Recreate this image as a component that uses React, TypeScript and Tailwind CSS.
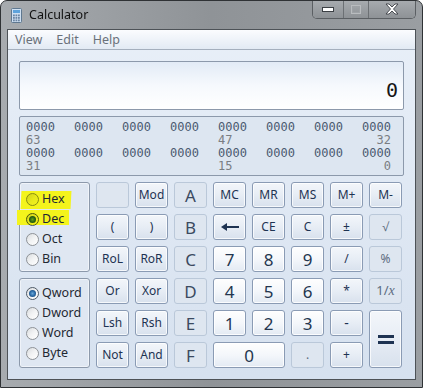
import React from "react";

const UI = "font-['Noto_Sans','Open_Sans',sans-serif]";
const MONO = "font-['DejaVu_Sans_Mono','Liberation_Mono',monospace]";

type Kind = "op" | "digit" | "dis" | "hex";

const kindClass: Record<Kind, string> = {
  op: "border-[#8a9bb4] bg-linear-to-b from-[#f3f6fa] via-[#e7edf5] to-[#d8e1ed] text-[#1e3352] text-[12px] shadow-[inset_0_0_0_1px_rgba(255,255,255,0.75)]",
  digit:
    "border-[#8a9bb4] bg-linear-to-b from-[#fefefe] via-[#f4f7fb] to-[#e3eaf3] text-[#24364f] text-[17px] shadow-[inset_0_0_0_1px_rgba(255,255,255,0.85)]",
  dis: "border-[#bac8d9] bg-[#dee6f0] text-[#5d6c80] text-[12px]",
  hex: "border-[#bac8d9] bg-[#dee6f0] text-[#3b4a60] text-[17px]",
};

function Btn({
  children,
  kind = "op",
  extra = "",
}: {
  children?: React.ReactNode;
  kind?: Kind;
  extra?: string;
}) {
  return (
    <div
      className={`flex items-center justify-center rounded-[3px] border leading-none ${UI} ${kindClass[kind]} ${extra}`}
    >
      {children}
    </div>
  );
}

function Radio({
  label,
  checked = false,
  blend = false,
}: {
  label: string;
  checked?: boolean;
  blend?: boolean;
}) {
  return (
    <div className="relative flex h-[20px] items-center gap-[3px]">
      <div
        className={`flex h-[13px] w-[13px] items-center justify-center rounded-full border ${
          checked ? "border-[#4f5a66]" : "border-[#8e9297]"
        } bg-linear-to-br from-[#d9dcdf] via-[#f2f3f4] to-[#ffffff] ${blend ? "mix-blend-multiply" : ""}`}
      >
        {checked && (
          <div className="h-[7px] w-[7px] rounded-full bg-radial from-[#6aa8d8] via-[#2b6aa6] to-[#163f6a]" />
        )}
      </div>
      <span className={`text-[12.5px] leading-none text-[#1f2933] ${UI}`}>{label}</span>
    </div>
  );
}

function CalcIcon() {
  return (
    <svg width="11" height="15" viewBox="0 0 11 15">
      <rect x="0.5" y="0.5" width="10" height="14" rx="1" fill="#cfe0f2" stroke="#5f7890" />
      <rect x="2" y="2" width="7" height="3" fill="#5ea3dc" />
      {[0, 1, 2].map((r) =>
        [0, 1, 2].map((c) => (
          <rect key={`${r}${c}`} x={2 + c * 2.5} y={6.5 + r * 2.5} width="1.8" height="1.8" fill="#6c86a3" />
        ))
      )}
    </svg>
  );
}

function BackArrow() {
  return (
    <svg width="18" height="8" viewBox="0 0 18 8">
      <path d="M0 4 L6 0 L6 3 L18 3 L18 5 L6 5 L6 8 Z" fill="#1e3352" />
    </svg>
  );
}

const bitsRow = ["0000", "0000", "0000", "0000", "0000", "0000", "0000", "0000"];

export default function App() {
  return (
    <div className="flex h-[388px] w-[423px] flex-col overflow-hidden rounded-t-[7px] border border-[#2f3235] bg-linear-to-r from-[#a7abaf] via-[#8f9397] to-[#9a9ea2]">
      {/* Title bar */}
      <div className="flex h-[28px] shrink-0 items-start justify-between">
        <div className="flex items-center gap-[7px] pl-[10px] pt-[7px]">
          <CalcIcon />
          <span className={`text-[12.5px] leading-none text-[#111] ${UI}`}>Calculator</span>
        </div>
        <div className="-mt-[1px] mr-[6px] flex h-[19px] overflow-hidden rounded-b-[5px] border border-t-0 border-[#5b5f63] shadow-[inset_0_0_0_1px_rgba(255,255,255,0.35)]">
          <div className="flex w-[31px] items-center justify-center border-r border-[#6c7074] bg-linear-to-b from-[#a8acb0] to-[#8e9296]">
            <svg width="12" height="5" viewBox="0 0 12 5">
              <rect x="0.5" y="0.5" width="11" height="4" fill="#ffffff" stroke="#3c4045" />
            </svg>
          </div>
          <div className="flex w-[25px] items-center justify-center border-r border-[#6c7074] bg-linear-to-b from-[#a8acb0] to-[#8e9296]">
            <svg width="10" height="9" viewBox="0 0 10 9">
              <rect x="0.5" y="0.5" width="9" height="8" fill="none" stroke="#b9bcbf" />
              <rect x="1.5" y="2.5" width="7" height="5" fill="none" stroke="#9ea2a6" />
            </svg>
          </div>
          <div className="flex w-[46px] items-center justify-center bg-linear-to-b from-[#a8acb0] to-[#8e9296]">
            <svg width="14" height="12" viewBox="0 0 14 12">
              <path
                d="M1 1 L4 1 L7 4 L10 1 L13 1 L8.5 6 L13 11 L10 11 L7 8 L4 11 L1 11 L5.5 6 Z"
                fill="#ffffff"
                stroke="#3c4045"
                strokeWidth="0.9"
                strokeLinejoin="round"
              />
            </svg>
          </div>
        </div>
      </div>

      {/* Client */}
      <div className="mx-[6px] mb-[7px] flex flex-1 flex-col border border-[#4d5257] bg-linear-to-b from-[#e8eff8] to-[#d6e1ef]">
        {/* Menu */}
        <div
          className={`flex h-[20px] shrink-0 items-center border-b border-[#a4afbd] bg-linear-to-b from-[#fbfcfe] to-[#e2eaf4] text-[12.5px] text-[#6a717a] ${UI}`}
        >
          <span className="px-[7px] pt-[1px]">View</span>
          <span className="px-[7px] pt-[1px]">Edit</span>
          <span className="px-[7px] pt-[1px]">Help</span>
        </div>

        <div className="flex flex-col px-[11px] pt-[11px]">
          {/* Display */}
          <div className="flex h-[49px] justify-end rounded-[2px] border border-[#8c99ab] bg-linear-to-b from-[#e2ebf6] via-[#f6f9fd] to-[#ffffff] pr-[5px] pt-[17px]">
            <span className={`text-[20px] leading-[23px] text-[#161616] ${MONO}`}>0</span>
          </div>

          {/* Binary */}
          <div className="mt-[6px] h-[60px] rounded-[2px] border border-[#8c99ab] bg-[#dde6f1] pl-[6px] pt-[4px]">
            <div className={`grid grid-cols-[repeat(7,48px)_29px] text-[12px] leading-[13px] ${MONO}`}>
              {bitsRow.map((b, i) => (
                <span key={`a${i}`} className="text-[#4b5a70]">
                  {b}
                </span>
              ))}
              <span className="text-[#7a7d82]">63</span>
              <span />
              <span />
              <span />
              <span className="text-[#7a7d82]">47</span>
              <span />
              <span />
              <span className="text-right text-[#7a7d82]">32</span>
              {bitsRow.map((b, i) => (
                <span key={`b${i}`} className="text-[#4b5a70]">
                  {b}
                </span>
              ))}
              <span className="text-[#7a7d82]">31</span>
              <span />
              <span />
              <span />
              <span className="text-[#7a7d82]">15</span>
              <span />
              <span />
              <span className="text-right text-[#7a7d82]">0</span>
            </div>
          </div>

          {/* Keypad */}
          <div className="mt-[6px] grid grid-cols-[71px_repeat(8,33px)] grid-rows-[repeat(6,26px)] gap-x-[6px] gap-y-[6px]">
            {/* Radix group */}
            <div className="relative col-start-1 row-span-3 row-start-1 rounded-[3px] border border-[#8c99ab] bg-[#dfe7f2] pl-[6px] pt-[6px] shadow-[inset_0_0_0_1px_rgba(255,255,255,0.5)]">
              <div className="absolute left-[1px] top-[8px] h-[18px] w-[50px] -skew-x-3 bg-[#f4f41c]" />
              <div className="absolute -left-[3px] top-[27px] h-[15px] w-[52px] bg-[#f4f41c]" />
              <Radio label="Hex" blend />
              <Radio label="Dec" checked blend />
              <Radio label="Oct" />
              <Radio label="Bin" />
            </div>
            {/* Word size group */}
            <div className="col-start-1 row-span-3 row-start-4 rounded-[3px] border border-[#8c99ab] bg-[#dfe7f2] pl-[6px] pt-[4px] shadow-[inset_0_0_0_1px_rgba(255,255,255,0.5)]">
              <Radio label="Qword" checked />
              <Radio label="Dword" />
              <Radio label="Word" />
              <Radio label="Byte" />
            </div>

            {/* Row 1 */}
            <Btn kind="dis" />
            <Btn>Mod</Btn>
            <Btn kind="hex">A</Btn>
            <Btn>MC</Btn>
            <Btn>MR</Btn>
            <Btn>MS</Btn>
            <Btn>M+</Btn>
            <Btn>M-</Btn>

            {/* Row 2 */}
            <Btn>(</Btn>
            <Btn>)</Btn>
            <Btn kind="hex">B</Btn>
            <Btn>
              <BackArrow />
            </Btn>
            <Btn>CE</Btn>
            <Btn>C</Btn>
            <Btn>±</Btn>
            <Btn kind="dis">√</Btn>

            {/* Row 3 */}
            <Btn>RoL</Btn>
            <Btn>RoR</Btn>
            <Btn kind="hex">C</Btn>
            <Btn kind="digit">7</Btn>
            <Btn kind="digit">8</Btn>
            <Btn kind="digit">9</Btn>
            <Btn>/</Btn>
            <Btn kind="dis">%</Btn>

            {/* Row 4 */}
            <Btn>Or</Btn>
            <Btn>Xor</Btn>
            <Btn kind="hex">D</Btn>
            <Btn kind="digit">4</Btn>
            <Btn kind="digit">5</Btn>
            <Btn kind="digit">6</Btn>
            <Btn>*</Btn>
            <Btn kind="dis">
              <span className="text-[13px]">
                1/<i className="font-['Liberation_Serif',serif] text-[14px]">x</i>
              </span>
            </Btn>

            {/* Row 5 */}
            <Btn>Lsh</Btn>
            <Btn>Rsh</Btn>
            <Btn kind="hex">E</Btn>
            <Btn kind="digit">1</Btn>
            <Btn kind="digit">2</Btn>
            <Btn kind="digit">3</Btn>
            <Btn extra="text-[14px]">-</Btn>
            <Btn kind="op" extra="row-span-2">
              <svg width="16" height="9" viewBox="0 0 16 9">
                <rect x="0" y="0" width="16" height="3" fill="#1e3352" />
                <rect x="0" y="6" width="16" height="3" fill="#1e3352" />
              </svg>
            </Btn>

            {/* Row 6 */}
            <Btn>Not</Btn>
            <Btn>And</Btn>
            <Btn kind="hex">F</Btn>
            <Btn kind="digit" extra="col-span-2">
              0
            </Btn>
            <Btn kind="dis">.</Btn>
            <Btn>+</Btn>
          </div>
        </div>
      </div>
    </div>
  );
}
